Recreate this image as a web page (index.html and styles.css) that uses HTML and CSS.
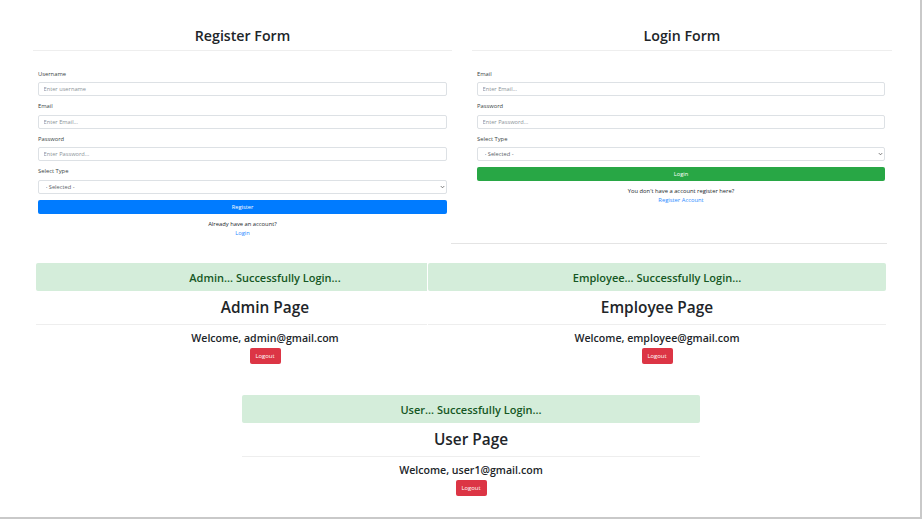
FILE: index.html
```html
<!DOCTYPE html>
<html lang="en">
<head>
<meta charset="utf-8">
<title>Forms and Pages</title>
<link rel="stylesheet" href="styles.css">
</head>
<body>
<div class="screen">
  <div class="forms">
    <section class="panel panel-register">
      <h2 class="title">Register Form</h2>
      <hr class="rule">
      <form class="form">
        <div class="group">
          <label class="label">Username</label>
          <input class="control" type="text" placeholder="Enter username">
        </div>
        <div class="group">
          <label class="label">Email</label>
          <input class="control" type="text" placeholder="Enter Email...">
        </div>
        <div class="group">
          <label class="label">Password</label>
          <input class="control" type="password" placeholder="Enter Password...">
        </div>
        <div class="group">
          <label class="label">Select Type</label>
          <div class="select-wrap">
            <select class="control select"><option>- Selected -</option></select>
            <svg class="chev" width="5" height="4" viewBox="0 0 5 4"><polyline points="0.8,1.1 2.5,2.8 4.2,1.1" fill="none" stroke="#666" stroke-width="0.9"/></svg>
          </div>
        </div>
        <button class="btn btn-blue" type="button">Register</button>
        <p class="note">Already have an account?<br><a class="link" href="#">Login</a></p>
      </form>
    </section>
    <section class="panel panel-login">
      <h2 class="title">Login Form</h2>
      <hr class="rule">
      <form class="form">
        <div class="group">
          <label class="label">Email</label>
          <input class="control" type="text" placeholder="Enter Email...">
        </div>
        <div class="group">
          <label class="label">Password</label>
          <input class="control" type="password" placeholder="Enter Password...">
        </div>
        <div class="group">
          <label class="label">Select Type</label>
          <div class="select-wrap">
            <select class="control select"><option>- Selected -</option></select>
            <svg class="chev" width="5" height="4" viewBox="0 0 5 4"><polyline points="0.8,1.1 2.5,2.8 4.2,1.1" fill="none" stroke="#666" stroke-width="0.9"/></svg>
          </div>
        </div>
        <button class="btn btn-green" type="button">Login</button>
        <p class="note">You don't have a account register here?<br><a class="link" href="#">Register Account</a></p>
      </form>
    </section>
  </div>
  <div class="divider"></div>
  <div class="roles">
    <section class="role role-admin">
      <div class="alert">Admin... Successfully Login...</div>
      <h1 class="page-title">Admin Page</h1>
      <hr class="rule">
      <h4 class="welcome">Welcome, admin@gmail.com</h4>
      <button class="btn btn-red" type="button">Logout</button>
    </section>
    <section class="role role-employee">
      <div class="alert">Employee... Successfully Login...</div>
      <h1 class="page-title">Employee Page</h1>
      <hr class="rule">
      <h4 class="welcome">Welcome, employee@gmail.com</h4>
      <button class="btn btn-red" type="button">Logout</button>
    </section>
  </div>
  <section class="role role-user">
    <div class="alert">User... Successfully Login...</div>
    <h1 class="page-title">User Page</h1>
    <hr class="rule">
    <h4 class="welcome">Welcome, user1@gmail.com</h4>
    <button class="btn btn-red" type="button">Logout</button>
  </section>
</div>
</body>
</html>
```
FILE: styles.css
```css
* { box-sizing: border-box; }
html, body { margin: 0; padding: 0; background: #fff; }
body {
  font-family: "Open Sans", "Noto Sans", sans-serif;
  color: #212529;
}
.screen {
  width: 922px;
  height: 519px;
  border-right: 2px solid #c9c9c9;
  border-bottom: 2px solid #c9c9c9;
  overflow: hidden;
  background: #fff;
}
.forms {
  display: flex;
  gap: 20px;
  padding: 27px 0 0 33px;
  align-items: flex-start;
}
.panel-register { width: 419px; }
.panel-login { width: 420px; }
.title {
  margin: 0 0 5px;
  font-size: 14.2px;
  line-height: 18px;
  font-weight: 600;
  text-align: center;
  color: #212529;
}
.rule {
  margin: 0;
  border: 0;
  border-top: 1px solid #eeeeee;
  height: 0;
}
.form { padding: 18.5px 5px 0; }
.panel-login .form { padding-right: 7px; }
.group { margin-bottom: 6px; }
.label {
  display: block;
  font-size: 5.8px;
  line-height: 9px;
  margin-bottom: 3.5px;
  color: #3a3f44;
}
.control {
  display: block;
  width: 100%;
  height: 14px;
  margin: 0;
  padding: 0 4.5px;
  border: 1px solid #dde1e5;
  border-radius: 2px;
  background: #fff;
  font-family: inherit;
  font-size: 5.7px;
  color: #5a6167;
  outline: none;
}
.control::placeholder { color: #8c939a; }
.select-wrap { position: relative; }
.select {
  appearance: none;
  -webkit-appearance: none;
  padding-left: 6.5px;
}
.chev {
  position: absolute;
  right: 2.5px;
  top: 5px;
}
.btn {
  display: block;
  border: 0;
  margin: 0;
  padding: 0;
  border-radius: 2px;
  color: #fff;
  font-family: inherit;
  font-size: 5.7px;
  cursor: pointer;
}
.form .btn { width: 100%; height: 14px; }
.btn-blue { background: #007bff; }
.btn-green { background: #28a745; }
.btn-red {
  background: #dc3545;
  width: 31px;
  height: 15.5px;
  margin: 0 auto;
  font-size: 5.9px;
}
.note {
  margin: 6px 0 0;
  text-align: center;
  font-size: 5.8px;
  line-height: 9px;
  color: #212529;
}
.link { color: #2b8cff; text-decoration: none; }
.divider {
  margin: 5.5px 0 0 451px;
  width: 436px;
  border-top: 1px solid #e4e4e4;
}
.roles {
  display: grid;
  grid-template-columns: 391px 67px 392px;
  margin: 19px 0 0 36px;
}
.role-admin { grid-column: 1 / 3; grid-row: 1; }
.role-employee {
  grid-column: 2 / 4;
  grid-row: 1;
  background: #fff;
  border-left: 1px solid #fff;
  position: relative;
}
.role-user {
  width: 458px;
  margin: 31.5px 0 0 242px;
}
.alert {
  height: 28px;
  border-radius: 2px;
  background: #d4edda;
  color: #155724;
  font-size: 11px;
  font-weight: 600;
  display: flex;
  align-items: center;
  justify-content: center;
}
.page-title {
  margin: 7px 0 7px;
  font-size: 15.4px;
  line-height: 19px;
  font-weight: 600;
  text-align: center;
}
.welcome {
  margin: 6.5px 0 3.5px;
  font-size: 10.6px;
  line-height: 13px;
  font-weight: 600;
  text-align: center;
}
```
